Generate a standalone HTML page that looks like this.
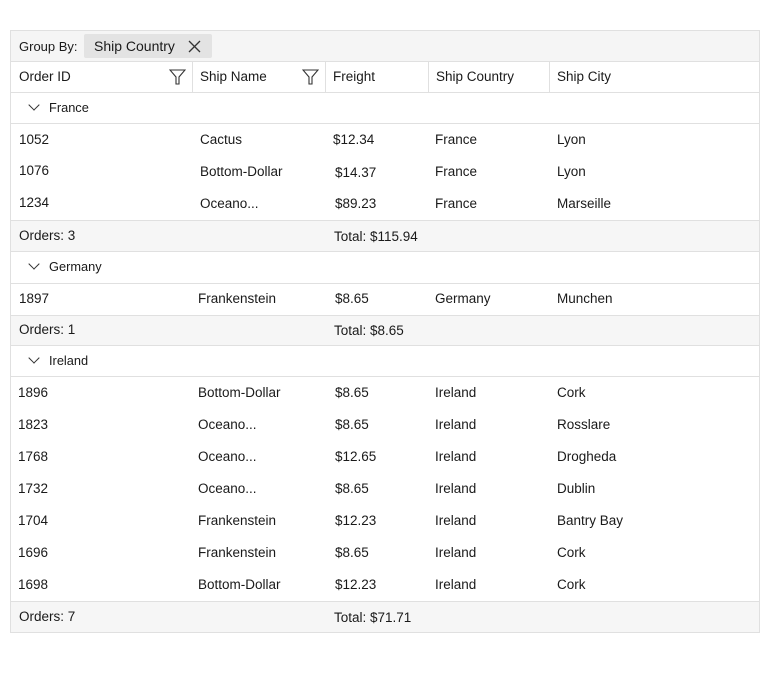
<!DOCTYPE html>
<html><head><style>
body{margin:0;background:#fff;font-family:"Liberation Sans",Arial,sans-serif;color:#1a1a1a;font-size:13.5px}
.r{position:absolute;left:10px;width:750px;box-sizing:border-box;border-left:1px solid #e0e0e0;border-right:1px solid #e0e0e0;border-bottom:1px solid #e0e0e0}
.r span{position:absolute;white-space:nowrap}
.g{background:#f5f5f5}
.s{background:#f6f6f6}
.grp span{font-size:12.8px}
.chev{position:absolute;left:19px;width:7px;height:7px;border-right:1px solid #333;border-bottom:1px solid #333;transform:rotate(45deg)}
.vl{position:absolute;top:0;bottom:0;width:1px;background:#e0e0e0}
</style></head><body>
<div class="r g" style="top:30px;height:32px;border-top:1px solid #e0e0e0">
 <span style="left:8px;top:8px;font-size:13px">Group By:</span>
 <div style="position:absolute;left:73px;top:3px;width:128px;height:24px;background:#e3e3e3;border-radius:2px"></div>
 <span style="left:83px;top:7px;font-size:14px">Ship Country</span>
 <svg style="position:absolute;left:177px;top:9px" width="13" height="13" viewBox="0 0 13 13"><path d="M1 1L12 12M12 1L1 12" stroke="#333" stroke-width="1.3"/></svg>
</div>
<div class="r" style="top:62px;height:31px">
 <span style="left:8px;top:7px">Order ID</span>
 <svg style="position:absolute;left:158px;top:7px" width="17" height="16" viewBox="0 0 17 16"><path d="M1 1H16L10 8V15H7V8Z" fill="none" stroke="#333" stroke-width="1.1"/></svg>
 <div class="vl" style="left:181px"></div>
 <span style="left:189px;top:7px">Ship Name</span>
 <svg style="position:absolute;left:291px;top:7px" width="17" height="16" viewBox="0 0 17 16"><path d="M1 1H16L10 8V15H7V8Z" fill="none" stroke="#333" stroke-width="1.1"/></svg>
 <div class="vl" style="left:314px"></div>
 <span style="left:322px;top:7px">Freight</span>
 <div class="vl" style="left:417px"></div>
 <span style="left:425px;top:7px">Ship Country</span>
 <div class="vl" style="left:538px"></div>
 <span style="left:546px;top:7px">Ship City</span>
</div>

<div class="r grp" style="top:93px;height:31px"><div class="chev" style="top:8px"></div><span style="left:38px;top:7px">France</span></div>
<div class="r" style="top:124px;height:32px;border-bottom:none"><span style="left:8px;top:8px">1052</span><span style="left:189px;top:8px">Cactus</span><span style="left:322px;top:8px">$12.34</span><span style="left:424px;top:8px">France</span><span style="left:546px;top:8px">Lyon</span></div>
<div class="r" style="top:156px;height:32px;border-bottom:none"><span style="left:8px;top:7px">1076</span><span style="left:189px;top:8px">Bottom-Dollar</span><span style="left:324px;top:9px">$14.37</span><span style="left:424px;top:8px">France</span><span style="left:546px;top:8px">Lyon</span></div>
<div class="r" style="top:188px;height:33px"><span style="left:8px;top:7px">1234</span><span style="left:189px;top:8px">Oceano...</span><span style="left:324px;top:8px">$89.23</span><span style="left:424px;top:8px">France</span><span style="left:546px;top:8px">Marseille</span></div>
<div class="r s" style="top:221px;height:31px"><span style="left:8px;top:7px">Orders: 3</span><span style="left:323px;top:8px">Total: $115.94</span></div>

<div class="r grp" style="top:252px;height:32px"><div class="chev" style="top:8px"></div><span style="left:38px;top:7px">Germany</span></div>
<div class="r" style="top:284px;height:32px"><span style="left:8px;top:7px">1897</span><span style="left:187px;top:7px">Frankenstein</span><span style="left:324px;top:7px">$8.65</span><span style="left:424px;top:7px">Germany</span><span style="left:546px;top:7px">Munchen</span></div>
<div class="r s" style="top:316px;height:30px"><span style="left:8px;top:6px">Orders: 1</span><span style="left:323px;top:7px">Total: $8.65</span></div>

<div class="r grp" style="top:346px;height:31px"><div class="chev" style="top:8px"></div><span style="left:38px;top:7px">Ireland</span></div>
<div class="r" style="top:377px;height:225px">
 <span style="left:7px;top:8px">1896</span><span style="left:187px;top:8px">Bottom-Dollar</span><span style="left:324px;top:8px">$8.65</span><span style="left:424px;top:8px">Ireland</span><span style="left:546px;top:8px">Cork</span>
 <span style="left:7px;top:40px">1823</span><span style="left:187px;top:40px">Oceano...</span><span style="left:324px;top:40px">$8.65</span><span style="left:424px;top:40px">Ireland</span><span style="left:546px;top:40px">Rosslare</span>
 <span style="left:7px;top:72px">1768</span><span style="left:187px;top:72px">Oceano...</span><span style="left:324px;top:72px">$12.65</span><span style="left:424px;top:72px">Ireland</span><span style="left:546px;top:72px">Drogheda</span>
 <span style="left:7px;top:104px">1732</span><span style="left:187px;top:104px">Oceano...</span><span style="left:324px;top:104px">$8.65</span><span style="left:424px;top:104px">Ireland</span><span style="left:546px;top:104px">Dublin</span>
 <span style="left:7px;top:136px">1704</span><span style="left:187px;top:136px">Frankenstein</span><span style="left:324px;top:136px">$12.23</span><span style="left:424px;top:136px">Ireland</span><span style="left:546px;top:136px">Bantry Bay</span>
 <span style="left:7px;top:168px">1696</span><span style="left:187px;top:168px">Frankenstein</span><span style="left:324px;top:168px">$8.65</span><span style="left:424px;top:168px">Ireland</span><span style="left:546px;top:168px">Cork</span>
 <span style="left:7px;top:200px">1698</span><span style="left:187px;top:200px">Bottom-Dollar</span><span style="left:324px;top:200px">$12.23</span><span style="left:424px;top:200px">Ireland</span><span style="left:546px;top:200px">Cork</span>
</div>
<div class="r s" style="top:602px;height:31px"><span style="left:8px;top:7px">Orders: 7</span><span style="left:323px;top:8px">Total: $71.71</span></div>
</body></html>
